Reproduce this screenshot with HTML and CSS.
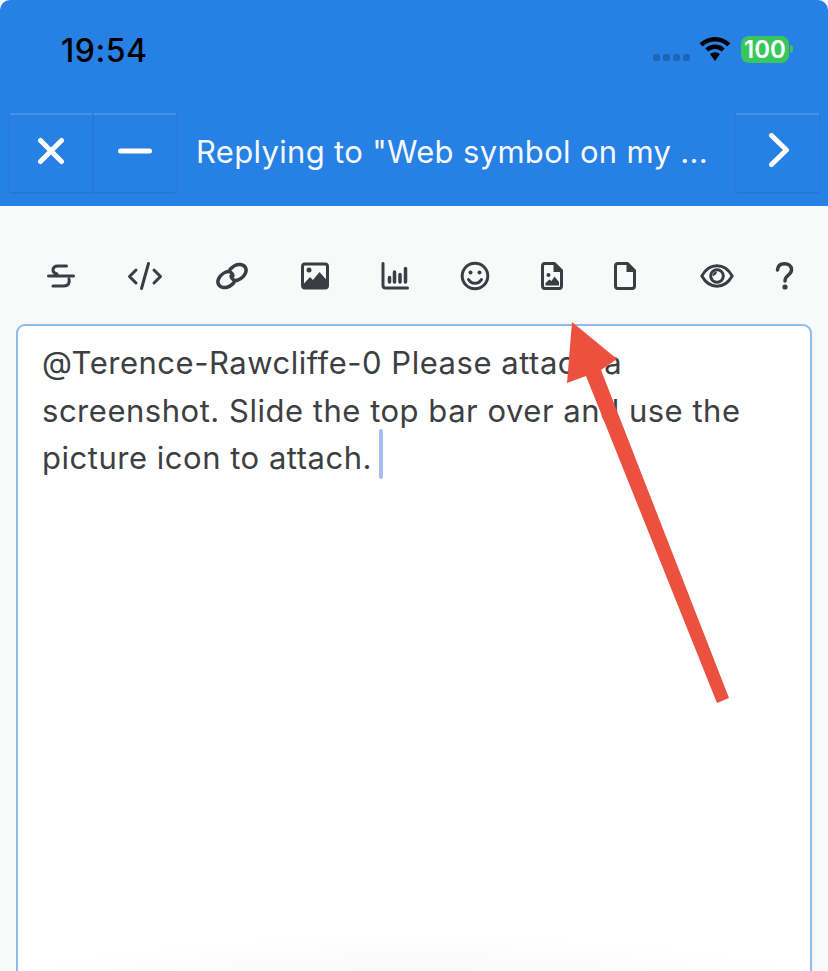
FILE: index.html
```html
<!DOCTYPE html>
<html lang="en">
<head>
<meta charset="utf-8">
<title>Reply</title>
<link rel="stylesheet" href="styles.css">
</head>
<body>
<div class="screen">
  <header class="header">
    <div class="status">
      <span class="time">19:54</span>
      <div class="status-right">
        <div class="signal"><i></i><i></i><i></i><i></i></div>
        <svg class="wifi" viewBox="0 0 32 24" width="32" height="24"><path d="M16 0C10 0 4.800 2.300 .6 6.300l3 3.200C7 6.300 11.200 4.500 16 4.500s9 1.800 12.400 5l3-3.200C27.200 2.300 22 0 16 0z"/><path d="M16 7.500c-3.800 0-7 1.400-9.700 3.900l3 3.100C11.200 12.800 13.400 11.900 16 11.900s4.800.9 6.700 2.600l3-3.100C23 8.900 19.800 7.500 16 7.500z"/><path d="M16 15.300c-2 0-3.500.7-4.900 1.900L16 24l4.900-6.800c-1.400-1.200-2.900-1.900-4.900-1.900z"/></svg>
        <div class="battery"><span class="battery-level">100</span><span class="battery-cap"></span></div>
      </div>
    </div>
    <div class="bar">
      <button class="bar-btn bar-btn-first" aria-label="Close"><svg viewBox="0 0 28 28" width="28" height="28"><path class="stroke-w" d="M3.500 3.500l21 21M24.500 3.500l-21 21"/></svg></button>
      <button class="bar-btn" aria-label="Minimize"><svg viewBox="0 0 34 28" width="34" height="28"><path class="stroke-w" d="M2.500 14h29"/></svg></button>
      <div class="bar-title">Replying to "Web symbol on my ...</div>
      <button class="bar-btn bar-btn-last" aria-label="Next"><svg viewBox="0 0 22 34" width="22" height="34"><path class="stroke-w" d="M3.500 2.500l15 14.500-15 14.500"/></svg></button>
    </div>
  </header>
  <main class="body">
    <div class="toolbar">
      <div class="tools">
        <svg class="icon" viewBox="0 0 28 28"><path class="s" d="M1.500 14h25M19.500 4H11C7.500 4 6 6 6 8c0 2 1.500 3.500 4 4M22 17c.5 2 .5 3.500-.5 5-1 1.300-2.500 2-4.500 2H6"/></svg>
        <svg class="icon" viewBox="0 0 36 28"><path class="s" d="M9 8L2.500 14.500 9 21M27 8l6.500 6.500L27 21M21.500 1.500L14.500 26.500"/></svg>
        <svg class="icon icon-bold" viewBox="0 0 34 28"><path class="s" d="M15 7.500c3-3.500 6.500-5.500 10.500-5 4.500.6 6.800 4.500 5 8.500-1.300 2.900-4.500 5.800-7.500 7-3.500 1.300-6.500-.7-7-4"/><path class="s" d="M19 20.500c-3 3.500-6.500 5.500-10.500 5-4.500-.6-6.800-4.500-5-8.500 1.300-2.900 4.500-5.800 7.500-7 3.500-1.300 6.500.7 7 4"/></svg>
        <svg class="icon" viewBox="0 0 28 28"><rect class="s" x="1.500" y="2" width="25" height="24" rx="2.500"/><circle class="f" cx="8" cy="8" r="2.500"/><path class="f" d="M3 25v-3.500l6-6.500 3 3 6.500-8 7.500 8.500V25z"/></svg>
        <svg class="icon" viewBox="0 0 28 28"><path class="s" d="M2 1.500v22c0 1.500.7 2.500 2.500 2.500H26.500"/><path class="s t" d="M8.500 15.500v4.500M13.500 10V20M19 12.500V20M24.500 6.500V20"/></svg>
        <svg class="icon" viewBox="0 0 28 28"><circle class="s" cx="14" cy="14" r="12.800"/><circle class="f" cx="9.500" cy="10.500" r="2"/><circle class="f" cx="18.500" cy="10.500" r="2"/><path class="s" d="M7.500 17.500c1.500 2.500 3.800 3.800 6.500 3.800s5-1.300 6.500-3.800"/></svg>
        <svg class="icon" viewBox="0 0 22 28"><path class="s" d="M4 1.500h9.500l7 7V24c0 1.500-1 2.500-2.500 2.500H4c-1.500 0-2.500-1-2.500-2.500V4C1.500 2.500 2.500 1.500 4 1.500z"/><path class="f" d="M12.500 2h2l6 6v2h-8z"/><circle class="f" cx="7.500" cy="13" r="2"/><path class="f" d="M4.500 23.500v-2.500l4-3.500 2 1.500 3-4.500 4.500 5.500v3.500z"/></svg>
        <svg class="icon icon-doc" viewBox="0 0 22 28"><path class="s" d="M4 1.500h9.500l7 7V24c0 1.500-1 2.500-2.500 2.500H4c-1.500 0-2.500-1-2.500-2.500V4C1.500 2.500 2.500 1.500 4 1.500z"/><path class="f" d="M12.500 2h2l6 6v2h-8z"/></svg>
      </div>
      <div class="tools-right">
        <svg class="icon" viewBox="0 0 34 28"><path class="s" d="M1.800 14C5.500 7.500 10.500 3.800 17 3.800S28.500 7.500 32.200 14C28.500 20.500 23.500 24.200 17 24.200S5.500 20.500 1.800 14z"/><circle class="s" cx="17" cy="14" r="6.300"/><path class="f" d="M17 9.500a4.500 4.500 0 0 0-4.500 4.500c1.800 0 4.500-1.800 4.500-4.500z"/></svg>
        <svg class="icon icon-bold" viewBox="0 0 20 28"><path class="s" d="M2.500 8C2.700 4 5.500 1.800 9.500 1.800c4.200 0 7 2.300 7 6 0 5.500-6.500 5-6.500 11.200"/><circle class="f" cx="10" cy="25" r="2.600"/></svg>
      </div>
    </div>
    <div class="editor">
      <p class="editor-text">@Terence-Rawcliffe-0 Please attach a screenshot. Slide the top bar over and use the picture icon to attach.<span class="caret"></span></p>
    </div>
  </main>
  <svg class="arrow" viewBox="0 0 828 971" width="828" height="971"><path d="M572 322L567 383 586 376 717 703 729 698 601 370 617 359z"/></svg>
</div>
</body>
</html>
```
FILE: styles.css
```css
* { box-sizing: border-box; }
html, body { margin: 0; padding: 0; background: #fff; }
.screen {
  position: relative;
  width: 828px;
  height: 971px;
  overflow: hidden;
  background: #f8f9f9;
  font-family: Inter, "Liberation Sans", sans-serif;
}
.header {
  height: 206px;
  background: #2780e3;
  border-radius: 10px 10px 0 0;
  padding-top: 29px;
}
.status {
  display: flex;
  justify-content: space-between;
  align-items: center;
  height: 40px;
  padding: 0 35px 0 61px;
}
.time { font-size: 32px; font-weight: 500; color: #000; letter-spacing: .5px; margin-top: 2px; }
.status-right { display: flex; align-items: center; }
.signal { display: flex; gap: 3px; margin-right: 9px; margin-top: 17px; }
.signal i { width: 7px; height: 7px; border-radius: 2.500px; background: #1d65b5; }
.wifi { fill: #000; margin-right: 10px; margin-top: -1px; }
.battery { display: flex; align-items: center; }
.battery-level {
  width: 48px; height: 27px; border-radius: 8px;
  background: #39c65c; color: #fff;
  font-size: 24px; font-weight: 600; line-height: 27px; text-align: center;
}
.battery-cap { width: 3px; height: 8px; margin-left: 1px; border-radius: 0 3px 3px 0; background: #39c65c; }
.bar { display: flex; align-items: stretch; height: 79px; margin-top: 44px; padding-left: 10px; padding-right: 9px; }
.bar-btn {
  width: 82px; height: 79px; padding: 0 0 5px;
  display: flex; align-items: center; justify-content: center;
  background: #2780e3;
  border: 0;
  border-top: 2px solid #4592e8;
  box-shadow: 0 1px 2px rgba(0, 0, 0, .12);
}
.bar-btn-first { margin-right: 2px; }
.bar-title {
  flex: 1; min-width: 0;
  padding-left: 20px;
  color: #f4f8fd;
  font-size: 31px; line-height: 78px; white-space: nowrap; overflow: hidden;
  letter-spacing: .32px;
}
.bar-btn-last { width: 83px; padding: 0 0 7px 3px; }
.stroke-w { fill: none; stroke: #fff; stroke-width: 5px; stroke-linecap: round; stroke-linejoin: round; }
.body { padding: 0 16px; }
.toolbar { display: flex; justify-content: space-between; align-items: center; height: 118px; padding: 22px 0 0 31px; }
.tools { display: flex; align-items: center; gap: 52px; }
.tools-right { display: flex; align-items: center; gap: 41px; padding-right: 17px; }
.icon { display: block; height: 28px; width: auto; overflow: visible; }
.icon-doc { margin-left: -1.500px; }
.s { fill: none; stroke: #3a3e42; stroke-width: 3px; stroke-linecap: round; stroke-linejoin: round; }
.icon-bold .s { stroke-width: 3.500px; }
.t { stroke-width: 3.500px; }
.f { fill: #3a3e42; }
.editor {
  height: 700px;
  border: 2px solid #8fbdf1;
  border-radius: 9px 9px 0 0;
  background: radial-gradient(ellipse 430px 60px at 50% 670px, #f8f8f8 0, #fbfbfb 60%, #fff 100%) no-repeat #fff;
  padding: 13px 24px;
}
.editor-text {
  margin: 0;
  color: #3d4043;
  font-size: 31px;
  line-height: 47.500px;
  letter-spacing: .52px;
}
.caret {
  display: inline-block;
  width: 4px; height: 50px;
  margin: -10px 0 -10px 7px;
  border-radius: 2px;
  background: #a6bcf3;
}
.arrow { position: absolute; left: 0; top: 0; pointer-events: none; }
.arrow path { fill: #ec503e; }
```
